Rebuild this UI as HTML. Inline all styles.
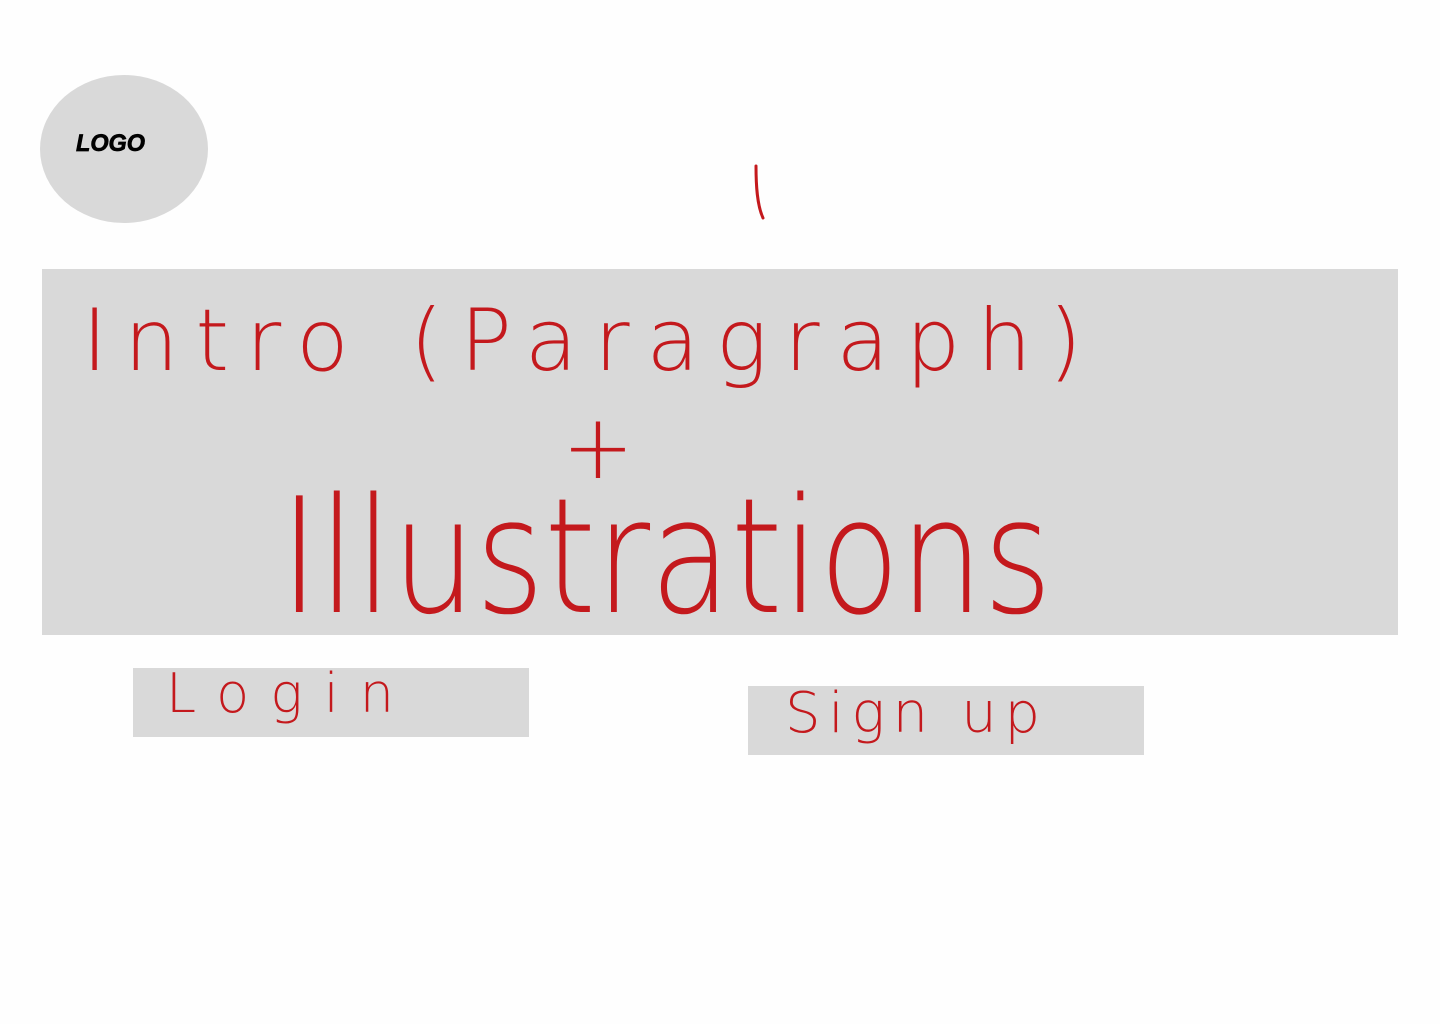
<!DOCTYPE html>
<html><head><meta charset="utf-8"><style>
html,body{margin:0;padding:0;background:#fefefe;width:1440px;height:1024px;overflow:hidden}
svg{display:block}
.h{fill:#c4191d;font-family:"DejaVu Sans","Liberation Sans",sans-serif;font-weight:200}
</style></head><body>
<svg width="1440" height="1024" viewBox="0 0 1440 1024" xmlns="http://www.w3.org/2000/svg">
<ellipse cx="124" cy="149" rx="84" ry="74" fill="#d9d9d9"/>
<text x="76" y="151" font-family="Liberation Sans,sans-serif" font-weight="bold" font-style="italic" font-size="24" fill="#000" stroke="#000" stroke-width="0.7" textLength="69" lengthAdjust="spacingAndGlyphs">LOGO</text>
<path d="M756 166 C756 185 757 205 763 218" stroke="#c4191d" stroke-width="3" fill="none" stroke-linecap="round"/>
<rect x="42" y="269" width="1356" height="366" fill="#d9d9d9"/>
<rect x="133" y="668" width="396" height="69" fill="#d9d9d9"/>
<rect x="748" y="686" width="396" height="69" fill="#d9d9d9"/>
<text class="h" x="82" y="370" font-size="86" textLength="1000" lengthAdjust="spacing">Intro (Paragraph)</text>
<text class="h" x="562" y="478" font-size="90" textLength="72" lengthAdjust="spacingAndGlyphs">+</text>
<text class="h" x="280" y="612" font-size="160" textLength="772" lengthAdjust="spacingAndGlyphs">Illustrations</text>
<text class="h" x="166" y="712" font-size="54" textLength="228" lengthAdjust="spacing">Login</text>
<text class="h" x="785" y="732" font-size="56" textLength="255" lengthAdjust="spacing">Sign up</text>
</svg>
</body></html>
